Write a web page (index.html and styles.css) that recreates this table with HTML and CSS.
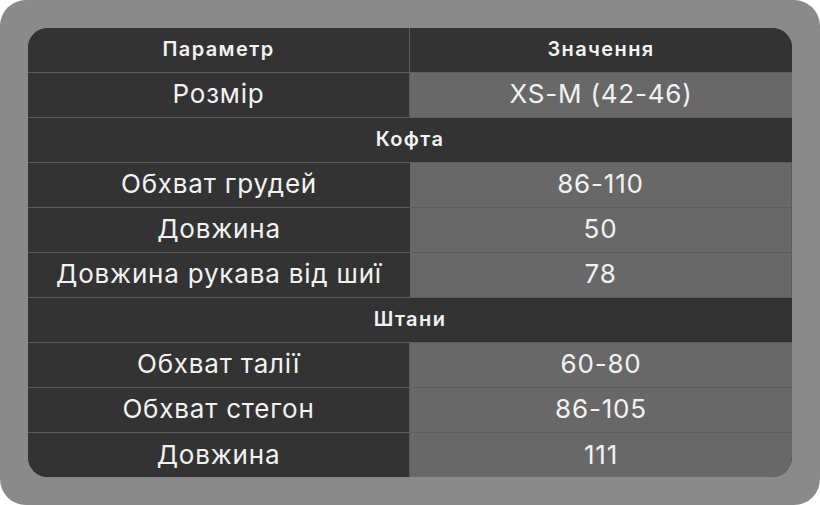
FILE: index.html
```html
<!DOCTYPE html>
<html lang="uk">
<head>
<meta charset="utf-8">
<link rel="stylesheet" href="styles.css">
</head>
<body>
<div class="panel">
  <div class="table">
    <div class="cell head">Параметр</div>
    <div class="cell head">Значення</div>
    <div class="cell">Розмір</div>
    <div class="cell val">XS-M (42-46)</div>
    <div class="cell section">Кофта</div>
    <div class="cell">Обхват грудей</div>
    <div class="cell val">86-110</div>
    <div class="cell">Довжина</div>
    <div class="cell val">50</div>
    <div class="cell">Довжина рукава від шиї</div>
    <div class="cell val">78</div>
    <div class="cell section">Штани</div>
    <div class="cell">Обхват талії</div>
    <div class="cell val">60-80</div>
    <div class="cell">Обхват стегон</div>
    <div class="cell val">86-105</div>
    <div class="cell last">Довжина</div>
    <div class="cell val last">111</div>
  </div>
</div>
</body>
</html>
```

FILE: styles.css
```css
* { box-sizing: border-box; }
html, body { margin: 0; padding: 0; background: #ffffff; }
body { width: 820px; height: 505px; }
.panel {
  width: 820px;
  height: 505px;
  background: #8a8a8a;
  border-radius: 26px;
  padding: 28px;
}
.table {
  width: 764px;
  height: 449px;
  background: #333333;
  border-radius: 20px;
  overflow: hidden;
  display: grid;
  grid-template-columns: 382px 382px;
  grid-auto-rows: 45px;
  font-family: Inter, "Open Sans", sans-serif;
  color: #f2f2f2;
}
.cell {
  display: flex;
  align-items: center;
  justify-content: center;
  padding-bottom: 3px;
  font-size: 26px;
  font-weight: 400;
  letter-spacing: 0.8px;
  border-bottom: 1px solid #5c5c5c;
  background: #333333;
}
.cell:nth-child(odd):not(.section) { border-right: 1px solid #5c5c5c; }
.cell.val { background: #686868; border-right: none; }
.cell.head { font-size: 20px; font-weight: 600; letter-spacing: 1.4px; }
.cell.head:nth-child(2) { border-right: none; }
.cell.section { grid-column: 1 / span 2; font-size: 20px; font-weight: 600; letter-spacing: 1.4px; }
.cell.last { border-bottom: none; }
```
